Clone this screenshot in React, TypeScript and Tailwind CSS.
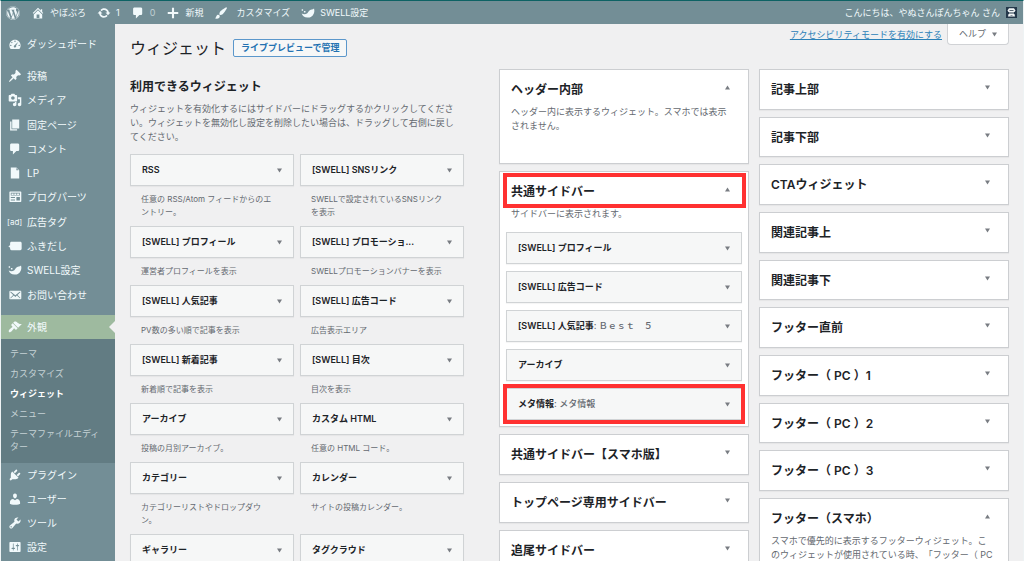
import { useState } from "react";
import type { ReactNode } from "react";
import { FaWordpress } from "react-icons/fa";

const ICONS: Record<string, string> = {
  post: "M10.44 3.02l1.82-1.82 6.36 6.35-1.83 1.82c-1.05-.68-2.48-.57-3.41.36l-.75.75c-.92.93-1.04 2.35-.35 3.41l-1.83 1.82-2.41-2.41-2.8 2.79c-.42.42-3.38 2.71-3.8 2.29s1.86-3.39 2.28-3.81l2.79-2.79L4.1 9.36l1.83-1.82c1.05.69 2.48.57 3.4-.36l.75-.75c.93-.92 1.05-2.35.36-3.41z",
  media:
    "M13 11V4c0-.55-.45-1-1-1h-1.67L9 1H5L3.67 3H2c-.55 0-1 .45-1 1v7c0 .55.45 1 1 1h10c.55 0 1-.45 1-1zM7 4.5c1.38 0 2.5 1.12 2.5 2.5S8.38 9.5 7 9.5 4.5 8.38 4.5 7 5.62 4.5 7 4.5zM14 6h5v10.5c0 1.38-1.12 2.5-2.5 2.5S14 17.88 14 16.5s1.12-2.5 2.5-2.5c.17 0 .34.02.5.05V9h-3V6zm-4 8.05V13h2v3.5c0 1.38-1.12 2.5-2.5 2.5S7 17.88 7 16.5 8.12 14 9.5 14c.17 0 .34.02.5.05z",
  page: "M6 15V2h10v13H6zm-1 1h8v2H3V5h2v11z",
  comments: "M5 2h9c1.1 0 2 .9 2 2v7c0 1.1-.9 2-2 2h-2l-5 5v-5H5c-1.1 0-2-.9-2-2V4c0-1.1.9-2 2-2z",
  file: "M12 2l4 4v12H4V2h8zm0 4h3l-3-3v3z",
  parts:
    "M19 16V3c0-.55-.45-1-1-1H3c-.55 0-1 .45-1 1v13c0 .55.45 1 1 1h15c.55 0 1-.45 1-1zM4 4h13v4H4V4zm1 1v2h3V5H5zm4 0v2h3V5H9zm4 0v2h3V5h-3zM4 10h6v1.5H4V10zm8 0h5v5h-5v-5zm-8 3.5h6V15H4v-1.5z",
  balloon: "M5 4h12.5c1.1 0 2 .9 2 2v8c0 1.1-.9 2-2 2H5c-1.1 0-2-.9-2-2v-1.5L.5 10.5 3 9V6c0-1.1.9-2 2-2z",
  mail: "M19 14.5v-9c0-.83-.67-1.5-1.5-1.5H3.49c-.83 0-1.5.67-1.5 1.5v9c0 .83.67 1.5 1.5 1.5H17.5c.83 0 1.5-.67 1.5-1.5zm-1.31-9.11c.33.33.15.67-.03.84L13.6 9.95l3.9 4.06c.12.14.2.36.06.51-.13.16-.43.15-.56.05l-4.37-3.73-2.14 1.95-2.13-1.95-4.37 3.73c-.13.1-.43.11-.56-.05-.14-.15-.06-.37.06-.51l3.9-4.06-4.06-3.72c-.18-.17-.36-.51-.03-.84s.67-.17.95.07l6.24 5.04 6.25-5.04c.28-.24.62-.4.95-.07z",
  appearance:
    "M14.48 11.06L7.41 3.99l1.5-1.5c.5-.56 2.3-.47 3.51.32 1.21.8 1.43 1.28 2.91 2.1 1.18.64 2.45 1.26 4.45.85zm-.71.71L6.7 4.7 4.93 6.47c-.39.39-.39 1.02 0 1.41l1.06 1.06c.39.39.39 1.03 0 1.42-.6.6-1.43 1.11-2.21 1.69-.35.26-.7.53-1.01.84C1.43 14.23.4 16.08 1.4 17.07c.99 1 2.84-.03 4.18-1.36.31-.31.58-.66.85-1.02.57-.78 1.08-1.61 1.69-2.21.39-.39 1.02-.39 1.41 0l1.06 1.06c.39.39 1.02.39 1.41 0z",
  plugins:
    "M13.11 4.36L9.87 7.6 8 5.73l3.24-3.24c.35-.34 1.05-.2 1.56.32.52.51.66 1.21.31 1.55zm-8 1.77l.91-1.12 9.01 9.01-1.19.84c-.71.71-2.63 1.16-3.82 1.16H6.14L4.9 17.26c-.59.59-1.54.59-2.12 0-.59-.58-.59-1.53 0-2.12l1.24-1.24v-3.88c0-1.13.4-3.19 1.09-3.89zm7.26 3.97l3.24-3.24c.34-.35 1.04-.21 1.55.31.52.51.66 1.21.31 1.55l-3.24 3.25z",
  users:
    "M10 9.25c-2.27 0-2.73-3.44-2.73-3.44C7 4.02 7.82 2 9.97 2c2.16 0 2.98 2.02 2.71 3.81 0 0-.41 3.44-2.68 3.44zm0 2.57L12.72 10c2.39 0 4.52 2.33 4.52 4.53v2.49s-3.65 1.13-7.24 1.13c-3.65 0-7.24-1.13-7.24-1.13v-2.49c0-2.25 1.94-4.48 4.47-4.48z",
  tools:
    "M16.68 9.77c-1.34 1.34-3.3 1.67-4.95.99l-5.41 6.52c-.99.99-2.59.99-3.58 0s-.99-2.59 0-3.57l6.52-5.42c-.68-1.65-.35-3.61.99-4.95 1.28-1.28 3.12-1.62 4.72-1.06l-2.89 2.89 2.82 2.82 2.86-2.87c.53 1.58.18 3.39-1.08 4.65zM3.81 16.21c.4.39 1.04.39 1.43 0 .4-.4.4-1.04 0-1.43-.39-.4-1.03-.4-1.43 0-.39.39-.39 1.03 0 1.43z",
  settings:
    "M18 16V4c0-.55-.45-1-1-1H3c-.55 0-1 .45-1 1v12c0 .55.45 1 1 1h14c.55 0 1-.45 1-1zM8 11h1c.55 0 1 .45 1 1s-.45 1-1 1H8v1.5c0 .28-.22.5-.5.5s-.5-.22-.5-.5V13H6c-.55 0-1-.45-1-1s.45-1 1-1h1V5.5c0-.28.22-.5.5-.5s.5.22.5.5V11zm5-2h-1c-.55 0-1-.45-1-1s.45-1 1-1h1V5.5c0-.28.22-.5.5-.5s.5.22.5.5V7h1c.55 0 1 .45 1 1s-.45 1-1 1h-1v5.5c0 .28-.22.5-.5.5s-.5-.22-.5-.5V9z",
  home: "M16 8.5l1.53 1.53-1.06 1.06L10 4.6l-6.47 6.49-1.06-1.06L10 2.5l4 4v-2h2v4zm-6-2.46l6 5.99V18H4v-5.97zM12 17v-5H8v5h4z",
  update:
    "M10.2 3.28c3.53 0 6.43 2.61 6.92 6h2.08l-3.5 4-3.5-4h2.32c-.45-1.97-2.21-3.45-4.32-3.45-1.45 0-2.73.71-3.54 1.78L4.95 5.66C6.23 4.2 8.11 3.28 10.2 3.28zm-.4 13.44c-3.52 0-6.43-2.61-6.92-6H.8l3.5-4c1.17 1.33 2.33 2.67 3.5 4H5.48c.45 1.97 2.21 3.45 4.32 3.45 1.45 0 2.73-.71 3.54-1.78l1.71 1.95c-1.28 1.46-3.15 2.38-5.25 2.38z",
  plus: "M8.5 2.5h3v6h6v3h-6v6h-3v-6h-6v-3h6z",
  brush:
    "M18.33 3.57s.27-.8-.31-1.36c-.53-.52-1.22-.24-1.22-.24-.61.3-5.76 3.47-7.67 5.57-.86.96-2.06 3.79-1.09 4.82.92.98 3.96-.17 4.79-1 2.06-2.06 5.21-7.17 5.5-7.79zM1.4 17.65c2.37-1.56 1.46-3.41 3.23-4.64.93-.65 2.22-.62 3.08.29.63.67.8 2.57-.16 3.46-1.57 1.45-4 1.55-6.15.89z",
  swell:
    "M18.6 3.4c1.8 6-1.6 12.6-8.2 13.1C5.600 17 2.400 14.500 1 10.800c3 1.400 5.800 1.200 8-.6 1.300-1 1.700-3.200 3.600-4.300 1.900-1.200 4-.9 6-2.500zM1 4.800h2v2H1zM4.200 7.200h2.200v2.200H4.200z",
  dashboard:
    "M3.76 17h12.48c1.1-1.37 1.76-3.11 1.76-5 0-4.42-3.58-8-8-8s-8 3.58-8 8c0 1.89.66 3.63 1.76 5zM10 5a1 1 0 1 1 0 2 1 1 0 0 1 0-2zM5.500 7a1 1 0 1 1 0 2 1 1 0 0 1 0-2zM4 11a1 1 0 1 1 0 2 1 1 0 0 1 0-2zM16 11a1 1 0 1 1 0 2 1 1 0 0 1 0-2zM14.500 7l-3 5.500c.6 1-.1 2.500-1.500 2.500s-2.200-1.500-1.400-2.600z",
};

function Icon({ name }: { name: string }) {
  return (
    <svg viewBox="0 0 20 20" className="size-[14px] shrink-0" fill="currentColor" fillRule="evenodd" aria-hidden="true">
      <path d={ICONS[name]} />
    </svg>
  );
}

function Arrow({ up = false }: { up?: boolean }) {
  return (
    <svg viewBox="0 0 6 5" className="size-[5px] shrink-0" fill="#787c82" aria-hidden="true">
      <path d={up ? "M0 5h6L3 0z" : "M0 0h6L3 5z"} />
    </svg>
  );
}

const MENU = [
  { icon: "post", label: "投稿" },
  { icon: "media", label: "メディア" },
  { icon: "page", label: "固定ページ" },
  { icon: "comments", label: "コメント" },
  { icon: "file", label: "LP" },
  { icon: "parts", label: "ブログパーツ" },
  { icon: "ad", label: "広告タグ" },
  { icon: "balloon", label: "ふきだし" },
  { icon: "swell", label: "SWELL設定" },
  { icon: "mail", label: "お問い合わせ" },
];

const SUBMENU = ["テーマ", "カスタマイズ", "ウィジェット", "メニュー", "テーマファイルエディター"];

const MENU_BOTTOM = [
  { icon: "plugins", label: "プラグイン" },
  { icon: "users", label: "ユーザー" },
  { icon: "tools", label: "ツール" },
  { icon: "settings", label: "設定" },
];

const WIDGETS = [
  { title: "RSS", text: "任意の RSS/Atom フィードからのエントリー。" },
  { title: "[SWELL] SNSリンク", text: "SWELLで設定されているSNSリンクを表示" },
  { title: "[SWELL] プロフィール", text: "運営者プロフィールを表示" },
  { title: "[SWELL] プロモーショ...", text: "SWELLプロモーションバナーを表示" },
  { title: "[SWELL] 人気記事", text: "PV数の多い順で記事を表示" },
  { title: "[SWELL] 広告コード", text: "広告表示エリア" },
  { title: "[SWELL] 新着記事", text: "新着順で記事を表示" },
  { title: "[SWELL] 目次", text: "目次を表示" },
  { title: "アーカイブ", text: "投稿の月別アーカイブ。" },
  { title: "カスタム HTML", text: "任意の HTML コード。" },
  { title: "カテゴリー", text: "カテゴリーリストやドロップダウン。" },
  { title: "カレンダー", text: "サイトの投稿カレンダー。" },
  { title: "ギャラリー" },
  { title: "タグクラウド" },
];

const SIDEBAR_WIDGETS = [
  { title: "[SWELL] プロフィール" },
  { title: "[SWELL] 広告コード" },
  { title: "[SWELL] 人気記事", name: "Ｂｅｓｔ　５" },
  { title: "アーカイブ" },
  { title: "メタ情報", name: "メタ情報", marked: true },
];

const CLOSED_AREAS = ["共通サイドバー【スマホ版】", "トップページ専用サイドバー", "追尾サイドバー"];

const RIGHT_AREAS = [
  "記事上部",
  "記事下部",
  "CTAウィジェット",
  "関連記事上",
  "関連記事下",
  "フッター直前",
  "フッター（ PC ）1",
  "フッター（ PC ）2",
  "フッター（ PC ）3",
];

function MenuItem({ icon, label, current = false }: { icon: string; label: string; current?: boolean }) {
  return (
    <li className={current ? "relative bg-[#9eba9f]" : ""}>
      <a href="#" className="flex h-6 items-center gap-[5px] pl-[7px] text-[10px] leading-4">
        {icon === "ad" ? <span className="-ml-px w-[15px] text-[8px] whitespace-nowrap">[ad]</span> : <Icon name={icon} />}
        {label}
      </a>
      {current && (
        <span className="absolute top-1.5 right-0 border-y-[6px] border-r-[6px] border-y-transparent border-r-[#f0f0f1]" />
      )}
    </li>
  );
}

function BarItem({ icon, children }: { icon: string; children: ReactNode }) {
  return (
    <a href="#" className="flex items-center gap-[5px]">
      <Icon name={icon} />
      {children}
    </a>
  );
}

function WidgetCard({ title, name }: { title: string; name?: string }) {
  return (
    <button
      type="button"
      className="flex h-8 w-full items-center justify-between border border-[#d0d3d5] bg-[#f6f7f7] px-[11px] text-left text-[9px] leading-[14px] shadow-[0_1px_1px_rgba(0,0,0,0.04)]"
    >
      <span className="font-semibold text-[#1d2327]">
        {title}
        {name && <span className="font-medium text-[#646970]">: {name}</span>}
      </span>
      <Arrow />
    </button>
  );
}

// red frame around the parts the reader should look at
function Mark({ className }: { className: string }) {
  return <span className={`pointer-events-none absolute border-4 border-[#ff3131] ${className}`} />;
}

function Area({ title, text, defaultOpen = false, children }: { title: string; text?: string; defaultOpen?: boolean; children?: ReactNode }) {
  const [open, setOpen] = useState(defaultOpen);

  return (
    <section className="relative border border-[#ccced1] bg-white shadow-[0_1px_1px_rgba(0,0,0,0.04)]">
      <button
        type="button"
        aria-expanded={open}
        onClick={() => setOpen(!open)}
        className={`flex w-full items-start justify-between pt-3 pr-[18px] pl-[11px] text-left ${open ? "pb-[7px]" : "pb-2.5"}`}
      >
        <span className="text-xs leading-4 font-semibold text-[#1d2327]">{title}</span>
        <span className="mt-[3px] flex">
          <Arrow up={open} />
        </span>
      </button>
      {open && (
        <>
          {text && <p className="pr-[14px] pl-[11px] text-[9px] leading-[14px] text-[#646970]">{text}</p>}
          {children}
        </>
      )}
    </section>
  );
}

export default function App() {
  return (
    <div className="flex h-screen flex-col overflow-hidden border-x border-t border-x-[#eef3f4] border-t-[#0d6264] bg-[#f0f0f1] font-['Inter','Noto_Sans_CJK_JP',sans-serif] [text-spacing-trim:space-all]">
      <header className="flex h-[23px] shrink-0 items-center justify-between bg-[#738e96] pr-1.5 pl-[5px] text-[9px] text-[#f1f9fb]">
        <nav className="flex items-center gap-[11px]">
          <a href="#" aria-label="WordPress">
            <FaWordpress className="size-[14px]" />
          </a>
          <BarItem icon="home">やぼぶろ</BarItem>
          <BarItem icon="update">1</BarItem>
          <BarItem icon="comments">
            <span className="opacity-60">0</span>
          </BarItem>
          <BarItem icon="plus">新規</BarItem>
          <BarItem icon="brush">
            <span className="pl-[3px]">カスタマイズ</span>
          </BarItem>
          <BarItem icon="swell">SWELL設定</BarItem>
        </nav>
        <a href="#" className="flex items-center gap-1.5">
          こんにちは、やぬさんぽんちゃん さん
          <svg viewBox="0 0 11 11" className="size-[11px]" aria-hidden="true">
            <path fill="#24384a" d="M0 0h11v11H0z" />
            <path fill="#f1f5f6" d="M3 1.200h5l1.500 2.300-1 1.500h-6l-1-1.500zM3 5.500h5v1H3zM2.500 7h6l.5 2.500H2z" />
            <path fill="#24384a" d="M3.500 3h4v.8h-4zM4.500 8h2v.5h-2z" />
          </svg>
        </a>
      </header>

      <div className="flex min-h-0 flex-1">
        <aside className="w-[114px] shrink-0 bg-[#738e96] pt-2 text-[#f1f9fb]">
          <ul>
            <MenuItem icon="dashboard" label="ダッシュボード" />
          </ul>
          <ul className="mt-2 grid min-h-[243px] auto-rows-fr">
            {MENU.map((item) => (
              <MenuItem key={item.label} icon={item.icon} label={item.label} />
            ))}
          </ul>
          <ul className="mt-2">
            <MenuItem icon="appearance" label="外観" current />
            <li>
              <ul className="bg-[#627c83] pt-[5px] pb-[7px] text-[9px] leading-[13px]">
                {SUBMENU.map((label) => (
                  <li key={label}>
                    <a
                      href="#"
                      className={`block py-[3px] pr-3.5 pl-[9px] ${label === "ウィジェット" ? "pb-1 font-semibold text-white" : label === "テーマファイルエディター" ? "text-[#c5d2d5]" : "pb-1 text-[#c5d2d5]"}`}
                    >
                      {label}
                    </a>
                  </li>
                ))}
              </ul>
            </li>
            {MENU_BOTTOM.map((item) => (
              <MenuItem key={item.label} icon={item.icon} label={item.label} />
            ))}
          </ul>
        </aside>

        <main className="min-w-0 flex-1 pr-[14px] pl-[15px]">
          <div className="flex h-[45px] items-start justify-between">
            <div className="flex items-center gap-[7px] pt-3">
              <h1 className="text-base leading-6 text-[#1d2327]">ウィジェット</h1>
              <a
                href="#"
                className="flex h-[18px] items-center rounded-xs border border-[#5b97cb] bg-[#f6f7f7] px-[7px] text-[9px] font-semibold text-[#2271b1]"
              >
                ライブプレビューで管理
              </a>
            </div>
            <div className="flex items-start gap-[5px] text-[9px]">
              <a href="#" className="pt-1 leading-[13px] text-[#2b81b8] underline">
                アクセシビリティモードを有効にする
              </a>
              <button
                type="button"
                className="flex h-[21px] items-center gap-1.5 rounded-b-sm border border-t-0 border-[#d0d2d5] bg-white px-[11px] text-[#646970]"
              >
                ヘルプ
                <Arrow />
              </button>
            </div>
          </div>

          <div className="grid grid-cols-[334fr_510fr] items-start gap-[35px]">
            <section className="pt-2.5">
              <h2 className="text-xs leading-4 font-semibold text-[#1d2327]">利用できるウィジェット</h2>
              <p className="mt-[7px] pr-2 text-[9px] leading-[14px] text-[#646970]">
                ウィジェットを有効化するにはサイドバーにドラッグするかクリックしてください。ウィジェットを無効化し設定を削除したい場合は、ドラッグして右側に戻してください。
              </p>
              <div className="mt-2.5 grid grid-cols-2 gap-x-1.5">
                {WIDGETS.map((w) => (
                  <div key={w.title}>
                    <WidgetCard title={w.title} />
                    {w.text && (
                      <p className="py-[7px] pr-[19px] pl-[11px] text-[8px] leading-[13px] text-[#646970]">{w.text}</p>
                    )}
                  </div>
                ))}
              </div>
            </section>

            <div className="grid grid-cols-2 items-start gap-2.5">
              <div className="flex flex-col gap-[7px]">
                <Area title="ヘッダー内部" text="ヘッダー内に表示するウィジェット。スマホでは表示されません。" defaultOpen>
                  <div className="h-[30px]" />
                </Area>
                <Area title="共通サイドバー" text="サイドバーに表示されます。" defaultOpen>
                  <Mark className="top-px right-[2px] left-[3px] h-[35px]" />
                  <div className="flex flex-col gap-[7px] px-1.5 pt-[11px] pb-1.5">
                    {SIDEBAR_WIDGETS.map((w) => (
                      <div key={w.title} className="relative">
                        <WidgetCard title={w.title} name={w.name} />
                        {w.marked && <Mark className="-inset-x-[3px] -inset-y-1" />}
                      </div>
                    ))}
                  </div>
                </Area>
                <div className="grid min-h-[137px] auto-rows-fr gap-[7px]">
                  {CLOSED_AREAS.map((title) => (
                    <Area key={title} title={title} />
                  ))}
                </div>
              </div>
              <div className="flex flex-col gap-[7px]">
                <div className="grid min-h-[422px] auto-rows-fr gap-[7px]">
                  {RIGHT_AREAS.map((title) => (
                    <Area key={title} title={title} />
                  ))}
                </div>
                <Area
                  title="フッター（スマホ）"
                  text="スマホで優先的に表示するフッターウィジェット。このウィジェットが使用されている時、「フッター（ PC"
                  defaultOpen
                />
              </div>
            </div>
          </div>
        </main>
      </div>
    </div>
  );
}
